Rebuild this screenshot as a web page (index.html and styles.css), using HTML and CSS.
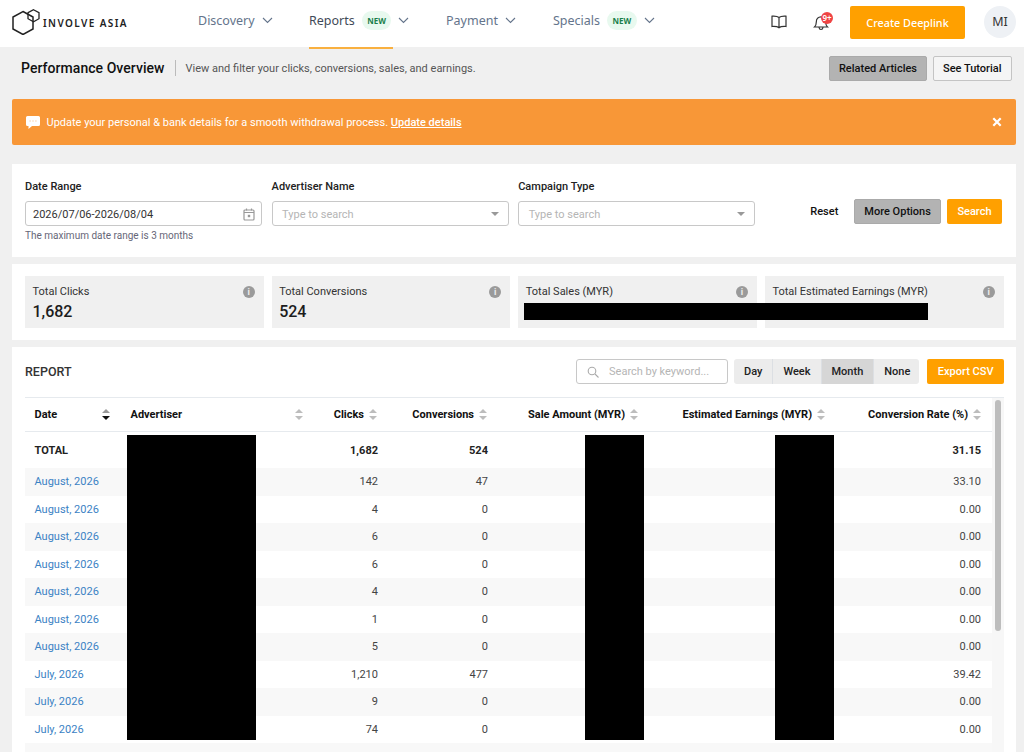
FILE: index.html
```html
<!DOCTYPE html>
<html lang="en">
<head>
  <meta charset="UTF-8">
  <meta name="viewport" content="width=device-width, initial-scale=1.0">
  <title>Performance Overview - Involve Asia</title>
  <link rel="stylesheet" href="styles.css">
</head>
<body>
  <header class="topbar">
    <a class="logo" href="#">
      <svg width="28" height="26" viewBox="0 0 28 26" fill="none" stroke="#222" stroke-width="1.500">
        <path d="M11 2.500L21 8v12l-10 5.500L1 20V8z"/>
        <path d="M21.500 0.700L27 3.700v6l-5.500 3-5.500-3v-6z" stroke-width="1.300"/>
      </svg>
      <span class="logo-text">INVOLVE ASIA</span>
    </a>
    <nav class="mainnav">
      <a class="nav-item nav-discovery" href="#">Discovery
        <svg class="chev" width="11" height="7" viewBox="0 0 11 7"><path d="M1 1l4.500 4.500L10 1"/></svg></a>
      <a class="nav-item nav-reports active" href="#">Reports <span class="new">NEW</span>
        <svg class="chev" width="11" height="7" viewBox="0 0 11 7"><path d="M1 1l4.500 4.500L10 1"/></svg></a>
      <a class="nav-item nav-payment" href="#">Payment
        <svg class="chev" width="11" height="7" viewBox="0 0 11 7"><path d="M1 1l4.500 4.500L10 1"/></svg></a>
      <a class="nav-item nav-specials" href="#">Specials <span class="new">NEW</span>
        <svg class="chev" width="11" height="7" viewBox="0 0 11 7"><path d="M1 1l4.500 4.500L10 1"/></svg></a>
    </nav>
    <div class="top-right">
      <svg class="icon-book" width="16" height="14" viewBox="0 0 16 14" fill="none" stroke="#333" stroke-width="1.200">
        <path d="M8 2.500C6.500 1.200 4 1 1 1.200v10.300c3-.2 5.500 0 7 1.200 1.500-1.200 4-1.400 7-1.200V1.200C12 1 9.500 1.200 8 2.500zM8 2.500v10.200"/>
      </svg>
      <div class="bell">
        <svg width="16" height="17" viewBox="0 0 16 17" fill="none" stroke="#333" stroke-width="1.200">
          <path d="M1.500 13c1.500-1.300 1.800-2.800 1.800-5 0-3 2-5.200 4.700-5.200s4.700 2.200 4.700 5.200c0 2.200.3 3.700 1.800 5zM6 13.500c.2 1.300 1 2 2 2s1.800-.7 2-2"/>
        </svg>
        <span class="bell-badge">9+</span>
      </div>
      <a class="btn-deeplink" href="#">Create Deeplink</a>
      <div class="avatar">MI</div>
    </div>
  </header>

  <div class="subhead">
    <h1>Performance Overview</h1>
    <p>View and filter your clicks, conversions, sales, and earnings.</p>
    <div class="subhead-btns">
      <button class="btn btn-grey">Related Articles</button>
      <button class="btn btn-outline">See Tutorial</button>
    </div>
  </div>

  <div class="alert">
    <svg width="14" height="13" viewBox="0 0 14 13" fill="#fff"><path d="M1.500 0h11A1.500 1.500 0 0 1 14 1.500v7a1.500 1.500 0 0 1-1.500 1.500H6l-3.500 3v-3h-1A1.500 1.500 0 0 1 0 8.500v-7A1.500 1.500 0 0 1 1.500 0z"/><path d="M3.500 4.500h1.200v1H3.500zM6.400 4.500h1.200v1H6.400zM9.300 4.500h1.200v1H9.300z" fill="#f8c48a"/></svg>
    <span class="alert-text">Update your personal &amp; bank details for a smooth withdrawal process. <a href="#">Update details</a></span>
    <svg class="alert-close" width="10" height="10" viewBox="0 0 10 10"><path d="M1.300 1.300l7.400 7.400M8.700 1.300L1.300 8.700" stroke="#fff" stroke-width="2.200"/></svg>
  </div>

  <section class="card filters">
    <div class="field">
      <label>Date Range</label>
      <div class="input">
        <span class="input-value">2026/07/06-2026/08/04</span>
        <svg width="12" height="13" viewBox="0 0 12 13" fill="none" stroke="#999" stroke-width="1.200"><rect x="1" y="2" width="10" height="10" rx="1"/><path d="M1 4.500h10M3.500 0.500v2M8.500 0.500v2"/><rect x="4.800" y="6.800" width="2.400" height="2.400" fill="#999" stroke="none"/></svg>
      </div>
      <small>The maximum date range is 3 months</small>
    </div>
    <div class="field">
      <label>Advertiser Name</label>
      <div class="input">
        <span class="placeholder">Type to search</span>
        <span class="caret"></span>
      </div>
    </div>
    <div class="field">
      <label>Campaign Type</label>
      <div class="input">
        <span class="placeholder">Type to search</span>
        <span class="caret"></span>
      </div>
    </div>
    <div class="filter-btns">
      <button class="btn btn-plain">Reset</button>
      <button class="btn btn-grey">More Options</button>
      <button class="btn btn-orange">Search</button>
    </div>
  </section>

  <section class="card stats">
    <div class="stat">
      <div class="stat-label">Total Clicks <span class="info">i</span></div>
      <div class="stat-value">1,682</div>
    </div>
    <div class="stat">
      <div class="stat-label">Total Conversions <span class="info">i</span></div>
      <div class="stat-value">524</div>
    </div>
    <div class="stat">
      <div class="stat-label">Total Sales (MYR) <span class="info">i</span></div>
    </div>
    <div class="stat">
      <div class="stat-label">Total Estimated Earnings (MYR) <span class="info">i</span></div>
    </div>
    <div class="redact redact-stats"></div>
  </section>

  <section class="card report">
    <div class="report-head">
      <h2>REPORT</h2>
      <div class="report-tools">
        <div class="search">
          <svg width="12" height="12" viewBox="0 0 12 12" fill="none" stroke="#aaa" stroke-width="1.100"><circle cx="5" cy="5" r="3.800"/><path d="M8 8l3.500 3.500"/></svg>
          <span class="placeholder">Search by keyword...</span>
        </div>
        <div class="segment">
          <span>Day</span><span>Week</span><span class="on">Month</span><span>None</span>
        </div>
        <button class="btn btn-orange btn-export">Export CSV</button>
      </div>
    </div>

    <div class="table-wrap">
      <table>
        <colgroup>
          <col class="c-date"><col class="c-adv"><col class="c-clicks"><col class="c-conv"><col class="c-sale"><col class="c-earn"><col class="c-rate">
        </colgroup>
        <thead>
          <tr>
            <th class="left"><span class="th-in th-split">Date <i class="sort sort-active"></i></span></th>
            <th class="left"><span class="th-in th-split th-adv">Advertiser <i class="sort"></i></span></th>
            <th><span class="th-in">Clicks <i class="sort"></i></span></th>
            <th><span class="th-in">Conversions <i class="sort"></i></span></th>
            <th><span class="th-in">Sale Amount (MYR) <i class="sort"></i></span></th>
            <th><span class="th-in">Estimated Earnings (MYR) <i class="sort"></i></span></th>
            <th><span class="th-in">Conversion Rate (%) <i class="sort"></i></span></th>
          </tr>
        </thead>
        <tbody>
          <tr class="total"><td class="left">TOTAL</td><td></td><td>1,682</td><td>524</td><td></td><td></td><td>31.15</td></tr>
          <tr><td class="left"><a href="#">August, 2026</a></td><td></td><td>142</td><td>47</td><td></td><td></td><td>33.10</td></tr>
          <tr><td class="left"><a href="#">August, 2026</a></td><td></td><td>4</td><td>0</td><td></td><td></td><td>0.00</td></tr>
          <tr><td class="left"><a href="#">August, 2026</a></td><td></td><td>6</td><td>0</td><td></td><td></td><td>0.00</td></tr>
          <tr><td class="left"><a href="#">August, 2026</a></td><td></td><td>6</td><td>0</td><td></td><td></td><td>0.00</td></tr>
          <tr><td class="left"><a href="#">August, 2026</a></td><td></td><td>4</td><td>0</td><td></td><td></td><td>0.00</td></tr>
          <tr><td class="left"><a href="#">August, 2026</a></td><td></td><td>1</td><td>0</td><td></td><td></td><td>0.00</td></tr>
          <tr><td class="left"><a href="#">August, 2026</a></td><td></td><td>5</td><td>0</td><td></td><td></td><td>0.00</td></tr>
          <tr><td class="left"><a href="#">July, 2026</a></td><td></td><td>1,210</td><td>477</td><td></td><td></td><td>39.42</td></tr>
          <tr><td class="left"><a href="#">July, 2026</a></td><td></td><td>9</td><td>0</td><td></td><td></td><td>0.00</td></tr>
          <tr><td class="left"><a href="#">July, 2026</a></td><td></td><td>74</td><td>0</td><td></td><td></td><td>0.00</td></tr>
          <tr><td colspan="7"></td></tr>
        </tbody>
      </table>
      <div class="scroll"><div class="thumb"></div></div>
    </div>
    <div class="redact redact-adv"></div>
    <div class="redact redact-sale"></div>
    <div class="redact redact-earn"></div>
  </section>
</body>
</html>
```

FILE: styles.css
```css
html, body {
  height: 100%;
  overflow: hidden;
}
body {
  margin: 0;
  background-color: #f0f0f0;
  color: #222;
  font-family: Roboto, "Liberation Sans", sans-serif;
  font-size: 11px;
}
a {
  color: inherit;
  text-decoration: none;
}
button {
  font-family: inherit;
}

/* top bar */
.topbar {
  height: 47px;
  background-color: #fff;
  display: flex;
  align-items: center;
  padding: 0 8px 0 12px;
  font-family: "Noto Sans", sans-serif;
}
.logo {
  display: flex;
  align-items: center;
  width: 186px;
  flex-shrink: 0;
}
.logo svg {
  margin-top: -3px;
  flex-shrink: 0;
}
.logo-text {
  font-size: 10px;
  font-weight: 600;
  letter-spacing: 1.400px;
  margin-left: 3px;
  margin-top: -2px;
}
.mainnav {
  display: flex;
  height: 47px;
  flex: 1;
}
.nav-item {
  display: flex;
  align-items: center;
  gap: 7px;
  height: 40px;
  font-size: 12.5px;
  color: #64748b;
  position: relative;
}
.nav-item.active {
  color: #3f4a58;
}
.nav-item.active::after {
  content: "";
  position: absolute;
  left: 0;
  right: 0;
  top: 47px;
  height: 2px;
  background-color: #f9b040;
}
.nav-discovery { width: 111px; }
.nav-reports { width: 84px; margin-right: 53px; }
.nav-payment { width: 107px; }
.chev {
  fill: none;
  stroke: #64748b;
  stroke-width: 1.100;
  flex-shrink: 0;
}
.new {
  background-color: #e8f9ef;
  color: #1a7f4b;
  font-size: 8px;
  font-weight: 700;
  border-radius: 10px;
  padding: 3px 5.500px;
  line-height: 13px;
}
.top-right {
  display: flex;
  align-items: center;
}
.icon-book {
  margin-left: 1px;
  margin-right: 26px;
  margin-top: -3px;
}
.bell {
  position: relative;
  width: 16px;
  height: 17px;
  margin-right: 21px;
  margin-top: -3px;
}
.bell-badge {
  position: absolute;
  top: -2px;
  left: 8px;
  width: 12px;
  height: 12px;
  border-radius: 50%;
  background-color: #ef4444;
  color: #fff;
  font-size: 8px;
  line-height: 12px;
  text-align: center;
  font-weight: 600;
}
.btn-deeplink {
  width: 115px;
  height: 33px;
  line-height: 33px;
  margin-top: -3px;
  text-align: center;
  background-color: #ffa000;
  border-radius: 2px;
  color: #fff;
  font-size: 10.800px;
  font-weight: 500;
}
.avatar {
  width: 32px;
  height: 32px;
  line-height: 32px;
  margin-left: 19px;
  margin-top: -3px;
  border-radius: 50%;
  background-color: #eef1f5;
  text-align: center;
  font-size: 12.5px;
  color: #333;
}

/* sub header */
.subhead {
  display: flex;
  align-items: center;
  height: 42px;
  margin: 0 12px 10px 21px;
}
.subhead h1 {
  margin: 0;
  font-size: 14px;
  font-weight: 500;
  letter-spacing: 0.05px;
  color: #111;
  padding-right: 10px;
  border-right: 1px solid #bbb;
  line-height: 16px;
}
.subhead p {
  margin: 0 0 0 10px;
  font-size: 11px;
  color: #555;
  flex: 1;
}
.subhead-btns {
  display: flex;
  gap: 6px;
}
.btn {
  height: 25px;
  border: 1px solid transparent;
  border-radius: 2px;
  font-size: 11px;
  font-weight: 500;
  padding: 0 10px;
  color: #111;
  cursor: pointer;
}
.subhead-btns .btn-grey {
  padding: 0 8.500px;
}
.subhead-btns .btn-outline {
  padding: 0 9.500px;
}
.btn-grey {
  background-color: #b3b3b3;
  border-color: #aaa;
}
.btn-outline {
  background-color: #f5f5f5;
  border-color: #c4c4c4;
}
.btn-plain {
  background: none;
}
.btn-orange {
  background-color: #ffa000;
  color: #fff;
}

/* alert */
.alert {
  display: flex;
  align-items: center;
  height: 46px;
  margin: 0 8px 19px 12px;
  padding: 0 14px;
  background-color: #f89737;
  border-radius: 2px;
  color: #fff;
}
.alert-text {
  margin-left: 6.500px;
  font-size: 11px;
  flex: 1;
}
.alert-text a {
  font-weight: 500;
  text-decoration: underline;
}

/* cards */
.card {
  background-color: #fff;
  margin: 0 8px 7px 12px;
  position: relative;
}
.filters {
  display: flex;
  gap: 9.600px;
  height: 93px;
  padding: 16px 14px 0 13px;
  box-sizing: border-box;
}
.field {
  width: 237px;
}
.field label {
  display: block;
  font-size: 11px;
  font-weight: 500;
  color: #222;
  line-height: 13px;
  margin-bottom: 8px;
}
.input {
  display: flex;
  align-items: center;
  justify-content: space-between;
  height: 25px;
  box-sizing: border-box;
  border: 1px solid #c8c8c8;
  border-radius: 3px;
  padding: 1px 6px 0 7px;
  font-size: 11px;
}
.input-value {
  color: #333;
}
.placeholder {
  color: #b5b5b5;
  font-size: 11px;
}
.input .placeholder {
  margin-left: 2.500px;
}
.caret {
  width: 0;
  height: 0;
  border-left: 4px solid transparent;
  border-right: 4px solid transparent;
  border-top: 4px solid #999;
  margin-right: 3px;
}
.field small {
  display: block;
  font-size: 10px;
  color: #667;
  margin-top: 4px;
}
.filter-btns {
  display: flex;
  align-items: flex-start;
  justify-content: flex-end;
  gap: 6px;
  flex: 1;
  padding-top: 19px;
}
.filter-btns .btn-plain {
  margin-right: -1px;
}
.filter-btns .btn-grey {
  padding: 0 9px;
}
.filter-btns .btn-orange {
  padding: 0 9.500px;
}

/* totals */
.stats {
  display: flex;
  gap: 8px;
  height: 76px;
  padding: 12px 12.400px 0 13px;
  box-sizing: border-box;
}
.stat {
  flex: 1;
  height: 52px;
  background-color: #f0f0f0;
  padding: 9px 9px 0 7.500px;
  box-sizing: border-box;
}
.stat-label {
  display: flex;
  justify-content: space-between;
  align-items: center;
  font-size: 11px;
  color: #333;
  line-height: 13px;
}
.stat-value {
  font-size: 16px;
  font-weight: 500;
  color: #1c1c1c;
  margin-top: 4px;
}
.info {
  width: 12px;
  height: 12px;
  border-radius: 50%;
  background-color: #9a9a9a;
  color: #eee;
  font-size: 9px;
  font-weight: 700;
  line-height: 12px;
  text-align: center;
}
.redact {
  position: absolute;
  background-color: #000;
}
.redact-stats {
  left: 512px;
  top: 39px;
  width: 404px;
  height: 17px;
}

/* report */
.report {
  padding: 12px 12px 0 13px;
  height: 440px;
  box-sizing: border-box;
}
.report-head {
  display: flex;
  justify-content: space-between;
  align-items: center;
  height: 25px;
  margin-bottom: 13px;
}
.report-head h2 {
  margin: 0;
  font-size: 12.5px;
  font-weight: 500;
  color: #333;
}
.report-tools {
  display: flex;
  gap: 8px;
}
.search {
  display: flex;
  align-items: center;
  gap: 10px;
  width: 152px;
  height: 25px;
  margin-right: -2px;
  padding-left: 10px;
  box-sizing: border-box;
  border: 1px solid #c8c8c8;
  border-radius: 3px;
}
.segment {
  display: flex;
  height: 25px;
  background-color: #ececec;
  border-radius: 3px;
  overflow: hidden;
  font-weight: 500;
  line-height: 25px;
  color: #222;
}
.segment span {
  padding: 0 10px;
  border-left: 1px solid #dcdfe3;
}
.segment span:first-child {
  border-left: none;
}
.segment span:last-child {
  padding-right: 9px;
}
.segment .on {
  background-color: #d6d6d6;
}
.btn-export {
  padding: 0 9.500px;
}
.table-wrap {
  display: flex;
  align-items: flex-start;
  border-top: 1px solid #e6eaee;
}
table {
  width: 967px;
  table-layout: fixed;
  border-collapse: collapse;
  flex-shrink: 0;
}
.c-date { width: 96px; }
.c-adv { width: 188px; }
.c-clicks { width: 79px; }
.c-conv { width: 110px; }
.c-sale { width: 151px; }
.c-earn { width: 187px; }
.c-rate { width: 156px; }
th, td {
  padding: 0 11px 0 9.500px;
  text-align: right;
  white-space: nowrap;
}
th {
  height: 33px;
  font-weight: 700;
  font-size: 11px;
  color: #111;
  border-bottom: 1px solid #e6eaee;
}
td {
  padding-right: 10px;
  height: 27.500px;
  color: #444;
  font-size: 11px;
}
td:last-child {
  padding-right: 11px;
}
.th-in {
  display: flex;
  align-items: center;
  justify-content: flex-end;
  gap: 5px;
}
.th-split {
  justify-content: space-between;
}
.th-adv .sort {
  margin-right: -5px;
}
.left {
  text-align: left;
}
tbody tr:nth-child(even) {
  background-color: #f8f8f8;
}
.total td {
  height: 36px;
  font-weight: 700;
  color: #222;
}
td a {
  color: #3b82c4;
}
.sort {
  display: inline-block;
  position: relative;
  width: 8px;
  height: 11px;
  flex-shrink: 0;
}
.sort::before, .sort::after {
  content: "";
  position: absolute;
  left: 0;
  border-left: 4px solid transparent;
  border-right: 4px solid transparent;
}
.sort::before {
  top: 0;
  border-bottom: 4.500px solid #bdbdbd;
}
.sort::after {
  bottom: 0;
  border-top: 4.500px solid #bdbdbd;
}
.sort-active::after {
  border-top-color: #111;
}
.sort-active::before {
  border-bottom-color: #999;
}
.scroll {
  width: 12px;
  background-color: #f7f7f7;
  flex-shrink: 0;
  height: 400px;
  padding: 2px 3px;
  box-sizing: border-box;
}
.thumb {
  height: 231px;
  background-color: #bdbdbd;
  border-radius: 3px;
}
.redact-adv {
  left: 115px;
  top: 88px;
  width: 129px;
  height: 305px;
}
.redact-sale {
  left: 573px;
  top: 88px;
  width: 59px;
  height: 305px;
}
.redact-earn {
  left: 763px;
  top: 88px;
  width: 59px;
  height: 305px;
}
```
